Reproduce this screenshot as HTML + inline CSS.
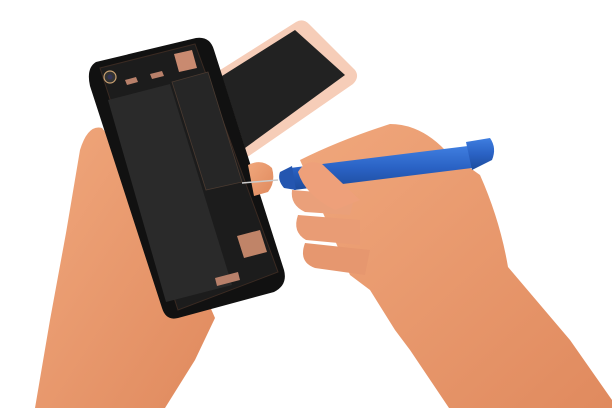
<!DOCTYPE html>
<html><head><meta charset="utf-8"><style>
html,body{margin:0;padding:0;background:#fff;width:612px;height:408px;overflow:hidden}
svg{display:block}
</style></head><body>
<svg width="612" height="408" viewBox="0 0 612 408" xmlns="http://www.w3.org/2000/svg">
<defs>
<linearGradient id="skin" x1="0" y1="0" x2="1" y2="1">
<stop offset="0" stop-color="#f0a77c"/><stop offset="1" stop-color="#e08a5e"/></linearGradient>
<linearGradient id="blue" x1="0" y1="0" x2="0" y2="1">
<stop offset="0" stop-color="#3f7ee0"/><stop offset="0.5" stop-color="#2a62c4"/><stop offset="1" stop-color="#1d4c9c"/></linearGradient>
</defs>
<!-- back phone -->
<path d="M217,72 L296,22 Q303,18 309,24 L355,70 Q360,77 353,84 L246,158 Q239,162 234,155 L215,82 Q213,76 217,72Z" fill="#f6cdb8"/>
<path d="M222,76 L295,30 L345,75 L245,148 Z" fill="#222"/>
<!-- left hand -->
<path d="M35,408 L50,320 L66,233 L80,150 Q88,124 102,128 L120,150 L150,240 L205,295 L215,318 L195,360 L165,408 Z" fill="url(#skin)"/>
<!-- main phone -->
<path d="M96,62 L196,38 Q210,36 214,50 L284,270 Q288,285 274,292 L178,318 Q166,321 162,308 L90,86 Q86,68 96,62Z" fill="#111"/>
<path d="M100,68 L195,44 L278,272 L178,310 Z" fill="#1c1c1c" stroke="#3a2a22" stroke-width="1"/>
<path d="M108,100 L170,84 L232,285 L166,302 Z" fill="#2a2a2a"/>
<path d="M172,82 L208,72 L242,182 L206,190 Z" fill="#262626" stroke="#4a3a30" stroke-width="0.8"/>
<path d="M174,54 L192,50 L197,68 L179,72Z" fill="#c98a70"/>
<path d="M237,236 L260,230 L267,252 L244,258Z" fill="#c08468"/>
<path d="M125,80 L136,77 L138,82 L127,85Z" fill="#b8806a"/>
<path d="M150,74 L162,71 L164,76 L152,79Z" fill="#b8806a"/>
<path d="M215,278 L238,272 L240,280 L217,286Z" fill="#b8806a"/>
<circle cx="110" cy="77" r="6" fill="#333" stroke="#c9a070" stroke-width="1.2"/>
<circle cx="110" cy="77" r="2.5" fill="#335"/>
<path d="M248,165 Q262,158 272,168 Q276,182 268,192 L254,196 Z" fill="url(#skin)"/>
<line x1="242" y1="183" x2="278" y2="180" stroke="#ccc" stroke-width="1.5"/>
<!-- right hand -->
<path d="M300,160 Q340,140 390,124 Q420,124 445,150 L480,175 Q500,220 508,267 L570,340 L612,400 L612,408 L449,408 L410,350 L395,330 L370,290 L350,275 Z" fill="url(#skin)"/>
<!-- curled fingers -->
<path d="M292,190 Q290,205 305,212 L350,215 L355,195 Z" fill="#eaa07a"/>
<path d="M298,215 Q292,232 306,240 L360,245 L360,220 Z" fill="#e99c75"/>
<path d="M305,243 Q298,262 315,268 L365,275 L370,250 Z" fill="#e6976f"/>
<!-- blue tool -->
<path d="M290,168 L468,146 L472,168 L294,190 Z" fill="url(#blue)"/>
<path d="M466,142 L490,138 Q497,148 492,160 L472,170 Z" fill="url(#blue)"/>
<path d="M280,172 L292,166 L296,190 L284,188 Q277,180 280,172Z" fill="#2456b0"/>
<!-- thumb -->
<path d="M298,172 Q306,158 322,164 L360,200 L335,210 Q305,195 298,172Z" fill="#eea07a"/>
</svg>
</body></html>
